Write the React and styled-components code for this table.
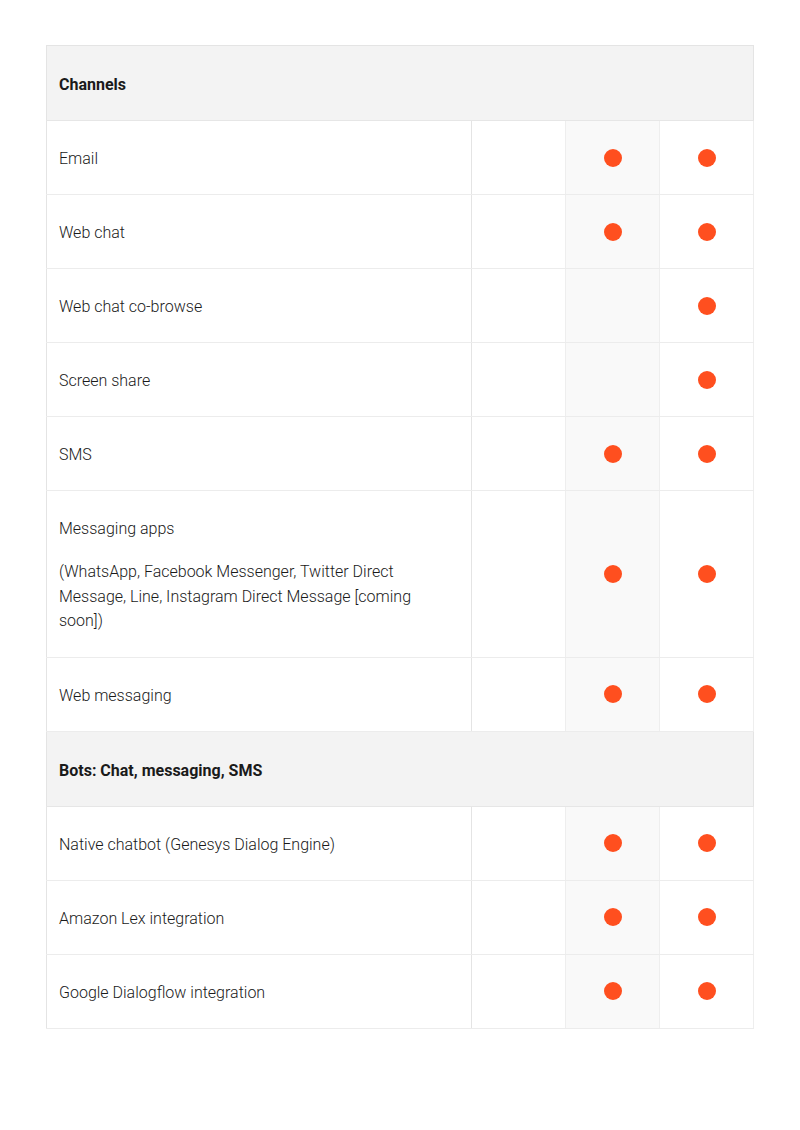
import React from 'react';
import styled, { createGlobalStyle } from 'styled-components';

const GlobalStyle = createGlobalStyle`
  body {
    margin: 0;
    background: #ffffff;
    font-family: Roboto, "Liberation Sans", sans-serif;
    color: #1a1a1a;
  }
`;

const Page = styled.div`
  padding: 45px 47px 40px 46px;
`;

const Table = styled.table`
  width: 707px;
  border-collapse: collapse;
  table-layout: fixed;
  border: 1px solid #e4e4e4;
`;

const Col = styled.col`
  width: ${(p) => p.$width}px;
`;

const SectionCell = styled.th`
  background-color: #f3f3f3;
  text-align: left;
  font-weight: 700;
  font-size: 16px;
  line-height: 24px;
  padding: 27px 12px 23px;
  border-bottom: 1px solid #e6e6e6;
`;

const FeatureCell = styled.td`
  font-weight: 300;
  font-size: 16px;
  line-height: 24px;
  padding: 26px 48px 23px 12px;
  border-bottom: 1px solid #ececec;
  border-right: 1px solid #e4e4e4;
  vertical-align: middle;

  p {
    margin: 0;
  }
  p + p {
    margin-top: 19px;
  }
  p + p {
    line-height: 24.5px;
  }
`;

const MarkCell = styled.td`
  background-color: ${(p) => (p.$shaded ? '#f9f9f9' : '#ffffff')};
  border-bottom: 1px solid #ececec;
  border-right: 1px solid #eeeeee;
  text-align: center;
  vertical-align: middle;
  padding: 0;
`;

const Dot = styled.span`
  display: inline-block;
  width: 18px;
  height: 18px;
  border-radius: 50%;
  background-color: #ff4f1f;
  vertical-align: middle;
  margin-top: -2px;
`;

const columns = [425, 94, 94, 94];

const sections = [
  {
    title: 'Channels',
    rows: [
      { name: ['Email'], marks: [false, true, true] },
      { name: ['Web chat'], marks: [false, true, true] },
      { name: ['Web chat co-browse'], marks: [false, false, true] },
      { name: ['Screen share'], marks: [false, false, true] },
      { name: ['SMS'], marks: [false, true, true] },
      {
        name: [
          'Messaging apps',
          '(WhatsApp, Facebook Messenger, Twitter Direct Message, Line, Instagram Direct Message [coming soon])',
        ],
        marks: [false, true, true],
      },
      { name: ['Web messaging'], marks: [false, true, true] },
    ],
  },
  {
    title: 'Bots: Chat, messaging, SMS',
    rows: [
      { name: ['Native chatbot (Genesys Dialog Engine)'], marks: [false, true, true] },
      { name: ['Amazon Lex integration'], marks: [false, true, true] },
      { name: ['Google Dialogflow integration'], marks: [false, true, true] },
    ],
  },
];

export default function App() {
  return (
    <Page>
      <GlobalStyle />
      <Table>
        <colgroup>
          {columns.map((w, i) => (
            <Col key={i} $width={w} />
          ))}
        </colgroup>
        <tbody>
          {sections.map((section) => (
            <React.Fragment key={section.title}>
              <tr>
                <SectionCell colSpan={4}>{section.title}</SectionCell>
              </tr>
              {section.rows.map((row) => (
                <tr key={row.name[0]}>
                  <FeatureCell>
                    {row.name.map((line) => (
                      <p key={line}>{line}</p>
                    ))}
                  </FeatureCell>
                  {row.marks.map((on, i) => (
                    <MarkCell key={i} $shaded={i === 1}>
                      {on && <Dot />}
                    </MarkCell>
                  ))}
                </tr>
              ))}
            </React.Fragment>
          ))}
        </tbody>
      </Table>
    </Page>
  );
}
